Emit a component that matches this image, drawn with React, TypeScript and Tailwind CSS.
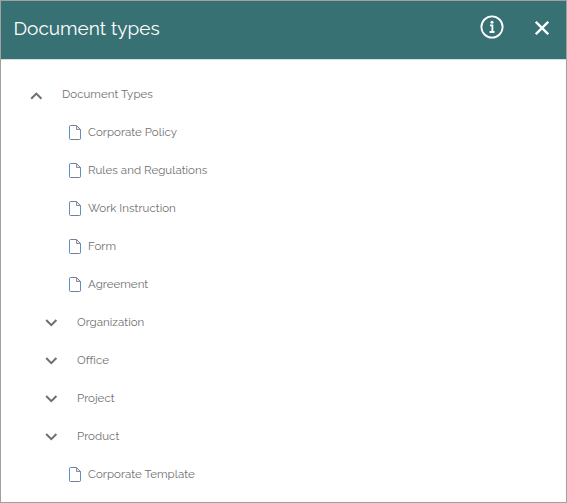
import React from "react";

type Item = { label: string; kind: "open" | "closed" | "file" };

const items: Item[] = [
  { label: "Document Types", kind: "open" },
  { label: "Corporate Policy", kind: "file" },
  { label: "Rules and Regulations", kind: "file" },
  { label: "Work Instruction", kind: "file" },
  { label: "Form", kind: "file" },
  { label: "Agreement", kind: "file" },
  { label: "Organization", kind: "closed" },
  { label: "Office", kind: "closed" },
  { label: "Project", kind: "closed" },
  { label: "Product", kind: "closed" },
  { label: "Corporate Template", kind: "file" },
];

function Chevron({ up = false }: { up?: boolean }) {
  return (
    <svg width="13" height="8" viewBox="0 0 13 8" fill="none" stroke="#6c6e70" strokeWidth="2" className={up ? "mt-1" : "mt-px"}>
      <path d={up ? "M1.2 6.7l5.1-5.1 5.1 5.1" : "M1.2 1l5.1 5.1 5.1-5.1"} />
    </svg>
  );
}

function FileIcon() {
  return (
    <svg width="12" height="15" viewBox="0 0 12 15" fill="none" className="mt-px">
      <path d="M7.5.5h-6q-1 0-1 1v12q0 1 1 1h9q1 0 1-1v-9z" stroke="#74809a" />
      <path d="M.5 1.5v12M11.5 5v8.5" stroke="#5c8fca" />
      <path d="M7.5.5v4h4z" fill="#e4e4ec" stroke="#7f8195" strokeWidth=".9" />
    </svg>
  );
}

const indent = { open: "pl-[29px]", closed: "pl-[44px]", file: "pl-[68px]" };
const gap = { open: "gap-[19px]", closed: "gap-[19px]", file: "gap-[7px]" };

export default function App() {
  return (
    <main className="h-[503px] w-[567px] overflow-hidden border border-[#a0a0a0] bg-white font-['Raleway','Lato',sans-serif] [font-variant-ligatures:none]">
      <header className="flex h-[59px] items-center border-b border-[#d0dfe0] bg-[#387174] pl-[12.5px] pr-[17px] text-white">
        <h1 className="-mt-1 flex-1 text-[19px] leading-6">Document types</h1>
        <button aria-label="Information" className="-mt-1.5 mr-[31px]">
          <svg width="24" height="24" viewBox="0 0 24 24" fill="none" stroke="white">
            <circle cx="12" cy="12" r="10.6" strokeWidth="1.8" />
            <circle cx="12" cy="7.3" r="1.5" fill="white" stroke="none" />
            <path d="M10 10.4h2.4v6.6M9.6 17h4.9" strokeWidth="1.8" />
          </svg>
        </button>
        <button aria-label="Close" className="-mt-1">
          <svg width="14" height="14" viewBox="0 0 14 14" fill="none" stroke="white" strokeWidth="2.3">
            <path d="m.8.8 12.4 12.4M13.2.8.8 13.2" />
          </svg>
        </button>
      </header>
      <ul className="pt-[15px]">
        {items.map(({ label, kind }) => (
          <li key={label} className={`flex h-[38px] items-center ${indent[kind]} ${gap[kind]}`}>
            {kind === "file" ? <FileIcon /> : <Chevron up={kind === "open"} />}
            <span className="text-[11.5px] leading-4 tracking-[0.04px] text-[#707070]">{label}</span>
          </li>
        ))}
      </ul>
    </main>
  );
}
